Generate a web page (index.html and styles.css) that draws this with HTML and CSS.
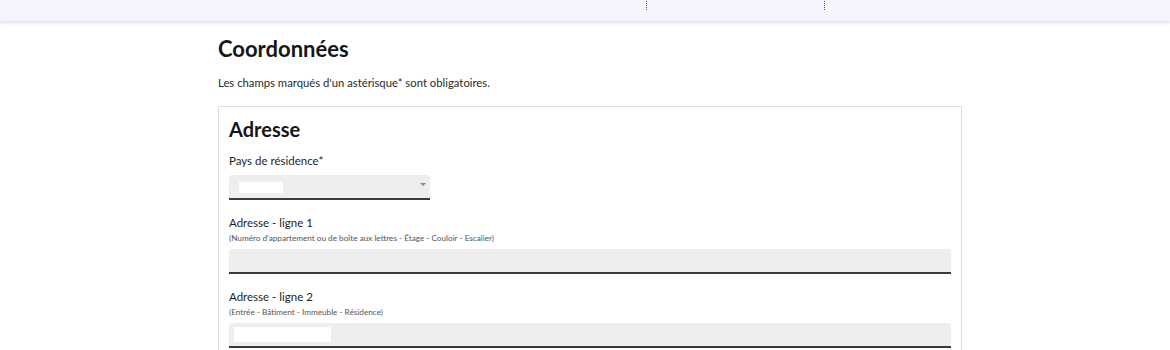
FILE: index.html
```html
<!DOCTYPE html>
<html lang="fr">
<head>
	<meta charset="utf-8">
	<title>Coordonnées</title>
	<link rel="stylesheet" href="styles.css">
</head>
<body>
	<div class="topbar">
		<span class="dots dots-a"></span>
		<span class="dots dots-b"></span>
	</div>
	<div class="page">
		<h1 class="title">Coordonnées</h1>
		<p class="intro">Les champs marqués d'un astérisque* sont obligatoires.</p>
		<div class="card">
			<h2 class="card-title">Adresse</h2>
			<!--pays-->
			<div class="field">
				<label class="label">Pays de résidence*</label>
				<div class="select">
					<span class="mask mask-select"></span>
					<span class="arrow"></span>
				</div>
			</div>
			<!--ligne 1-->
			<div class="field">
				<label class="label">Adresse - ligne 1</label>
				<div class="hint">(Numéro d'appartement ou de boîte aux lettres - Étage - Couloir - Escalier)</div>
				<div class="input"></div>
			</div>
			<!--ligne 2-->
			<div class="field">
				<label class="label">Adresse - ligne 2</label>
				<div class="hint">(Entrée - Bâtiment - Immeuble - Résidence)</div>
				<div class="input"><span class="mask mask-input"></span></div>
			</div>
		</div>
	</div>
</body>
</html>
```
FILE: styles.css
```css
*{
	margin: 0;
	padding: 0;
	box-sizing: border-box;
}
body{
	font-family: Lato, "Open Sans", sans-serif;
	color: #1e1e1e;
	background: #fff;
	height: 350px;
	overflow: hidden;
}
/*barre du haut*/
.topbar{
	height: 21px;
	background: #f4f5fe;
	box-shadow: 0 2px 3px rgba(0,0,0,0.12);
	position: relative;
}
.dots{
	position: absolute;
	top: 1px;
	width: 1px;
	height: 9px;
	border-left: 1px dotted #3c50b4;
}
.dots-a{ left: 646px; }
.dots-b{ left: 824px; }
/*contenu*/
.page{
	width: 744px;
	margin: 0 0 0 218px;
	padding-top: 15px;
}
.title{
	font-size: 22px;
	font-weight: 700;
	line-height: 26px;
	color: #161616;
}
.intro{
	font-size: 11.3px;
	line-height: 16px;
	margin-top: 13px;
	color: #2a2a2a;
}
.card{
	margin-top: 15px;
	border: 1px solid #dddddd;
	border-bottom: none;
	padding: 10px 10px 10px 10px;
}
.card-title{
	font-size: 20px;
	font-weight: 700;
	line-height: 24px;
	color: #161616;
}
.field{
	margin-top: 12px;
}
.field + .field{
	margin-top: 15px;
}
.label{
	display: block;
	font-size: 11.5px;
	line-height: 16px;
	color: #1e1e1e;
}
.hint{
	font-size: 8.2px;
	line-height: 12px;
	margin-top: 1px;
	color: #555;
}
.select{
	position: relative;
	width: 201px;
	height: 25px;
	margin-top: 6px;
	background: #eeeeee;
	border-bottom: 2px solid #3a3a3a;
	border-radius: 3px 3px 0 0;
}
.input{
	position: relative;
	width: 722px;
	height: 25px;
	margin-top: 5px;
	background: #eeeeee;
	border-bottom: 2px solid #3a3a3a;
	border-radius: 3px 3px 0 0;
}
.mask{
	position: absolute;
	background: #fff;
}
.mask-select{
	left: 10px;
	top: 7px;
	width: 44px;
	height: 11px;
}
.mask-input{
	left: 5px;
	top: 4px;
	width: 97px;
	height: 15px;
}
.arrow{
	position: absolute;
	right: 4px;
	top: 8px;
	width: 0;
	height: 0;
	border-left: 3px solid transparent;
	border-right: 3px solid transparent;
	border-top: 3px solid #888;
}
```
